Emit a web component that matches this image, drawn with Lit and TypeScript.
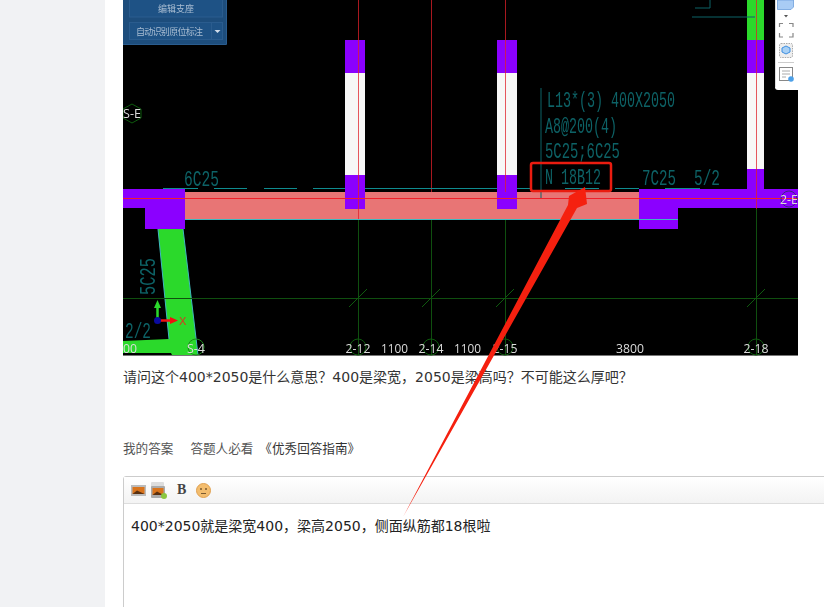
import { LitElement, html, css, svg } from "lit";
import { customElement } from "lit/decorators.js";

const TEAL = "#0d6266";
const Q = "\uFF1F";
const C = "\uFF0C";
const question = `请问这个400*2050是什么意思${Q}400是梁宽${C}2050是梁高吗${Q}不可能这么厚吧${Q}`;
const answer = `400*2050就是梁宽400${C}梁高2050${C}侧面纵筋都18根啦`;

const CAD_SIZE = 22;
const cadText = (x: number, y: number, w: number, t: string) => {
  const natural = t.length * CAD_SIZE * 0.6;
  return svg`<text transform="translate(${x} ${y}) scale(${w / natural} 1)" class="cad" font-size=${CAD_SIZE}>${t}</text>`;
};
const label = (x: number, y: number, w: number, t: string) =>
  svg`<text x=${x} y=${y} textLength=${w} lengthAdjust="spacingAndGlyphs" class="lab">${t}</text>`;
const axis = (x: number, y: number, t: string, w: number) =>
  svg`<circle cx=${x} cy="347" r="8" fill="none" stroke="#0d5a0d"/>${label(x - w / 2, y, w, t)}`;
const tick = (x: number) => svg`<line x1=${x - 9} y1="307" x2=${x + 9} y2="289" stroke="#0f5a0f"/>`;

@customElement("app-root")
export class AppRoot extends LitElement {
  static styles = css`
    :host { display: block; width: 824px; height: 607px; overflow: hidden; position: relative; background: #f1f2f4; font-family: "Open Sans", "Noto Sans CJK SC", sans-serif; color: #333; }
    .page { margin-left: 105px; height: 607px; background: #fff; padding-left: 18px; overflow: hidden; }
    .drawing { display: block; width: 675px; height: 356px; filter: blur(0.4px); }
    .cad { font-family: "Liberation Mono", monospace; fill: #0d6266; }
    .lab { font-family: "Open Sans", sans-serif; font-size: 13px; fill: #dcdcdc; }
    .pn { font-family: "Noto Sans CJK SC", sans-serif; font-size: 9px; fill: #a9bdd2; }
    .question { margin: 11px 0 0; font-family: "DejaVu Sans", "Noto Sans CJK SC", sans-serif; font-size: 14px; line-height: 20px; height: 20px; }
    .links { display: flex; margin-top: 52px; font-size: 12.6px; line-height: 20px; color: #555; }
    .links span:nth-child(1) { margin-right: 17px; }
    .links span:nth-child(2) { margin-right: 6px; }
    .links .guide { color: #333; }
    .editor { margin-top: 17px; width: 760px; height: 200px; border: 1px solid #ccc; border-radius: 3px; }
    .toolbar { display: flex; align-items: center; height: 26px; padding-left: 7px; gap: 5px; background: linear-gradient(#fff, #f3f3f3); border-bottom: 1px solid #ddd; }
    .toolbar svg { display: block; }
    .bold { font: bold 14px "Liberation Serif", serif; color: #444; margin: 0 5px; }
    .answer { padding: 12px 7px; font-family: "DejaVu Sans", "Noto Sans CJK SC", sans-serif; font-size: 14px; line-height: 20px; color: #222; }
    .arrow { position: absolute; left: 0; top: 0; width: 824px; height: 607px; pointer-events: none; }
  `;

  render() {
    return html`
      <div class="page">
        ${this.drawing()}
        <p class="question">${question}</p>
        <div class="links"><span>我的答案</span><span>答题人必看</span><span class="guide">《优秀回答指南》</span></div>
        <div class="editor">
          <div class="toolbar">
            <svg width="15" height="11" viewBox="0 0 15 11"><rect width="15" height="11" fill="#bbb"/><rect x="1.500" y="2" width="12" height="7" fill="#d9741c"/><path d="M1.500 9 6 5.500 13.500 9z" fill="#5a3010"/></svg>
            <svg width="16" height="17" viewBox="0 0 16 17"><rect x="0" y="0" width="13" height="13" rx="1" fill="#ddd"/><rect x="0" y="4" width="14" height="12" rx="1" fill="#aaa"/><rect x="1.500" y="6" width="11" height="7" fill="#d9741c"/><path d="M1.500 13 6 9.500l6.500 3.500z" fill="#5a3010"/><circle cx="13" cy="14" r="3" fill="#8cc63f"/></svg>
            <span class="bold">B</span>
            <svg width="15" height="15" viewBox="0 0 15 15"><circle cx="7.500" cy="7.500" r="7" fill="#f3bd6e" stroke="#e0a050"/><circle cx="5" cy="6" r="1" fill="#7a5a30"/><circle cx="10" cy="6" r="1" fill="#7a5a30"/><path d="M5 10.500h5" stroke="#7a5a30"/></svg>
          </div>
          <div class="answer">${answer}</div>
        </div>
      </div>
      <svg class="arrow" viewBox="0 0 824 607">
        <path d="M403 517 568 205 569 196 585 187 587 204 577 208 Z" fill="#f5200f"/>
      </svg>
    `;
  }

  drawing() {
    return html`<svg class="drawing" viewBox="123 0 675 356">
      <rect x="123" y="0" width="675" height="355" fill="#000"/>
      <rect x="123" y="355" width="675" height="1" fill="#777"/>

      <rect x="185" y="192" width="455" height="27" fill="#e87575"/>
      <path d="M123 189H185V229H145V208H123Z" fill="#8b00ff"/>
      <path d="M639 189H747V169H764V189H798V208H678V229H639Z" fill="#8b00ff"/>
      <path d="M158 229H183L198 355H172L171 353H123V341L169 339Z" fill="#2bd92b"/>
      <path d="M158 229L169 339M183 229L198 355" stroke="#3fb8c0" fill="none"/>

      <rect x="345" y="40" width="20" height="33" fill="#8b00ff"/>
      <rect x="345" y="73" width="20" height="102" fill="#f7f7f7"/>
      <rect x="345" y="175" width="20" height="34" fill="#8b00ff"/>
      <rect x="497" y="40" width="20" height="33" fill="#8b00ff"/>
      <rect x="497" y="73" width="20" height="102" fill="#f7f7f7"/>
      <rect x="497" y="175" width="20" height="34" fill="#8b00ff"/>
      <rect x="747" y="0" width="17" height="40" fill="#2bd92b"/>
      <rect x="747" y="40" width="17" height="33" fill="#8b00ff"/>
      <rect x="747" y="73" width="17" height="96" fill="#f7f7f7"/>

      <path d="M123 298.500H798M358.500 219V355M431.500 219V355M505.500 219V355M756.500 209V355" stroke="#0f4f0f" fill="none"/>
      <path d="M358.500 0V219M431.500 0V192M505.500 0V192M756.500 0V209" stroke="#e0202a" stroke-opacity=".75" fill="none"/>
      <path d="M123 198.500H798" stroke="#f0202a" fill="none"/>
      ${[358, 431, 505, 756].map(tick)}

      <path d="M185 219.500H678" stroke="#3fb8c0" fill="none"/>
      <path d="M163 188.500H198M214 188.500H247M264 188.500H297M313 188.500H345M365 188.500H497M517 188.500H530M565 188.500H599M615 188.500H639M665 188.500H700" stroke="#0f8c90" fill="none"/>

      <path d="M541 88V198" stroke=${TEAL} fill="none"/>
      ${cadText(547, 107, 128, "L13*(3) 400X2050")}
      ${cadText(545, 133, 72, "A8@200(4)")}
      ${cadText(545, 158, 75, "5C25;6C25")}
      ${cadText(545, 184, 56, "N 18B12")}
      ${cadText(642, 185, 34, "7C25")}
      ${cadText(694, 185, 26, "5/2")}
      ${cadText(184, 186, 35, "6C25")}
      ${cadText(125, 338, 26, "2/2")}
      <g transform="translate(155 295) rotate(-90)">${cadText(0, 0, 37, "5C25")}</g>
      <path d="M695 8H710V0M692 17H755" stroke=${TEAL} fill="none"/>
      <rect x="531" y="163" width="80" height="28" rx="2" fill="none" stroke="#ea1c10" stroke-width="2.500"/>

      ${axis(358, 353, "2-12", 25)}
      ${label(381, 353, 27, "1100")}
      ${axis(431, 353, "2-14", 25)}
      ${label(454, 353, 27, "1100")}
      ${axis(505, 353, "2-15", 25)}
      ${label(616, 353, 28, "3800")}
      ${axis(756, 353, "2-18", 25)}
      <circle cx="196" cy="347" r="8" fill="none" stroke="#1a8a1a"/>
      ${label(187, 353, 18, "S-4")}
      ${label(123, 353, 14, "00")}
      <path d="M132 104l9 5v9l-9 5-9-5v-9z" fill="none" stroke="#0d5a0d"/>
      ${label(123, 118, 18, "S-E")}
      <circle cx="789" cy="199" r="8" fill="none" stroke="#3a2a80"/>
      ${label(780, 204, 18, "2-E")}

      <path d="M157.500 321V305" stroke="#2bd92b" stroke-width="2.500"/>
      <path d="M157.500 300l-3.500 8h7z" fill="#2bd92b"/>
      <path d="M160 320.500H172" stroke="#f01010" stroke-width="2.500"/>
      <path d="M178 320.500l-8-3.500v7z" fill="#f01010"/>
      <circle cx="157.500" cy="320.500" r="3.500" fill="#0a0aa0"/>
      <text x="179" y="325" font-size="11" fill="#e03020" font-family="Liberation Sans, sans-serif">X</text>

      <rect x="123" y="0" width="103" height="44" fill="#1d4d7c"/>
      <path d="M226.500 0V44.500H123" stroke="#2a5c8e" fill="none"/>
      <rect x="129.500" y="-1" width="93" height="18" fill="#1e5285" stroke="#2a5c8e"/>
      <rect x="129.500" y="22.500" width="82" height="17" fill="#1e5285" stroke="#2a5c8e"/>
      <rect x="211.500" y="22.500" width="11" height="17" fill="#1e5285" stroke="#2a5c8e"/>
      <text x="158" y="12" class="pn">编辑支座</text>
      <text x="136" y="35" class="pn" textLength="67">自动识别原位标注</text>
      <path d="M214.500 30h6l-3 3z" fill="#d0dcea"/>

      <path d="M775 0H798V90H778a3 3 0 0 1-3-3Z" fill="#fff"/>
      <path d="M775.500 0V87" stroke="#ddd" fill="none"/>
      <path d="M777.500 0V9.500H791L793.500 7V0Z" fill="#a9ccf5" stroke="#6ea0dc" stroke-width=".8"/>
      <path d="M784 15h4l-2 2.500z" fill="#555"/>
      <path d="M783 23.500H779.500V27M789 23.500H793V27M779.500 33V37H783M793 33V37H789" fill="none" stroke="#888" stroke-width="1.200"/>
      <rect x="779.500" y="43.500" width="13" height="14" rx="1.500" fill="#eee" stroke="#aaa" stroke-dasharray="1.500 1"/>
      <path d="M786 46l4 2v4l-4 2-4-2v-4z" fill="#a8d0f5" stroke="#3d8ee0"/>
      <path d="M778 62.500H794" stroke="#ccc"/>
      <rect x="779.500" y="67.500" width="13" height="13" fill="#fff" stroke="#888"/>
      <path d="M782 71h8M782 74h8M782 77h4" stroke="#aaa"/>
      <circle cx="791" cy="79" r="2.800" fill="#4da0e8"/>
    </svg>`;
  }
}
